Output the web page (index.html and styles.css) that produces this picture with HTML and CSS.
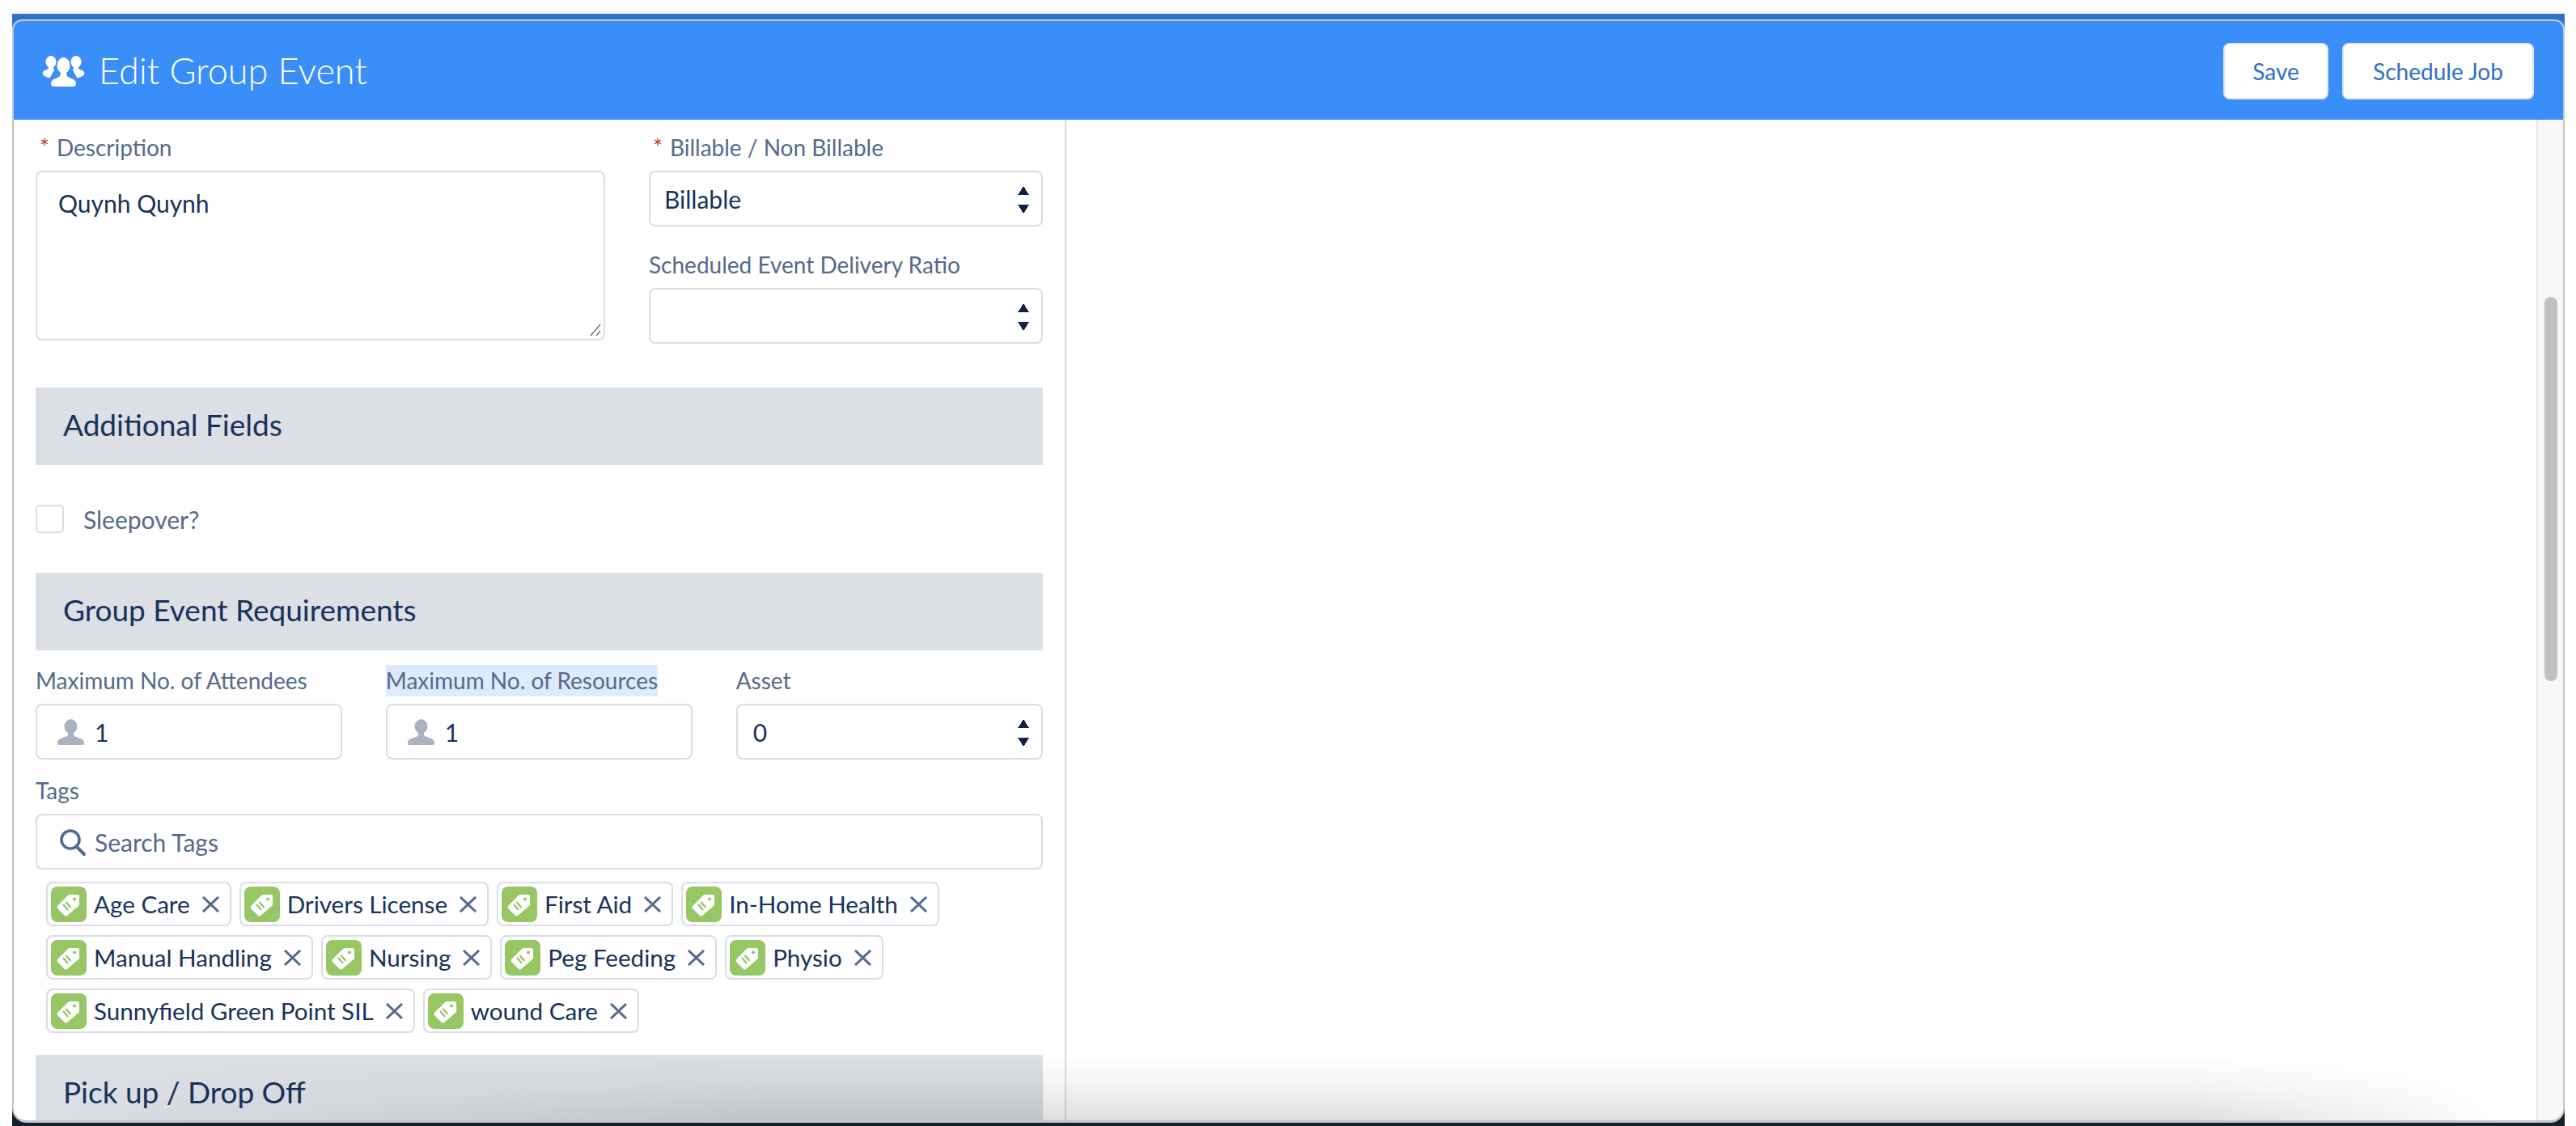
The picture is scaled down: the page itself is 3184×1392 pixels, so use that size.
FILE: index.html
```html
<!DOCTYPE html>
<html lang="en">
<head>
  <meta charset="UTF-8" />
  <title>Edit Group Event</title>
  <link rel="stylesheet" href="styles.css">
</head>
<body>

  <svg class="defs" width="0" height="0">
    <symbol id="tag" viewBox="0 0 44 44">
      <path d="M8 24 L21 11 Q22 10 23 10 L33 10 Q35 10 35 12 L35 22 Q35 23 34 24 L20 36 Q18 37 17 36 L8 27 Q7 25 8 24Z" fill="#fff"/>
      <circle cx="29" cy="15.5" r="2" fill="#97c665"/>
      <path d="M15 22 L21 29 M18.5 19 L24.5 26" stroke="#97c665" stroke-width="2.4" fill="none"/>
    </symbol>
    <symbol id="close" viewBox="0 0 23 20">
      <path d="M2 1 L21 19 M21 1 L2 19" stroke="#54698d" stroke-width="3" fill="none"/>
    </symbol>
    <symbol id="person" viewBox="0 0 33 32">
      <ellipse cx="16.5" cy="9" rx="8" ry="9" fill="#a8b3bf"/>
      <path d="M13 17 L20 17 L20 20 C22 23 33 23 33 29 L33 30 Q33 32 31 32 L2 32 Q0 32 0 30 L0 29 C0 23 11 23 13 20Z" fill="#a8b3bf"/>
    </symbol>
  </svg>

  <div class="backdrop">
    <div class="modal">

      <header class="modal-head">
        <div class="modal-title">
          <svg class="group-icon" width="53" height="38" viewBox="0 0 53 38">
            <ellipse cx="26.5" cy="12" rx="8" ry="10" fill="#fff"/>
            <path d="M23 21 L30 21 L31 25 C33 28 42 28 42 34 Q42 38 38 38 L15 38 Q11 38 11 34 C11 28 20 28 22 25Z" fill="#fff"/>
            <ellipse cx="11" cy="7.5" rx="6.5" ry="7.5" fill="#fff"/>
            <path d="M8 14 L14 14 L15 18 C13 21 12 23 10 27 Q8 28 3 25 C0 23 0 20 3 18 C6 17 8 17 8 14Z" fill="#fff"/>
            <ellipse cx="42" cy="7.5" rx="6.5" ry="7.5" fill="#fff"/>
            <path d="M45 14 L39 14 L38 18 C40 21 41 23 43 27 Q45 28 50 25 C53 23 53 20 50 18 C47 17 45 17 45 14Z" fill="#fff"/>
          </svg>
          <h1>Edit Group Event</h1>
        </div>
        <div class="modal-actions">
          <button class="btn btn-save">Save</button>
          <button class="btn btn-job">Schedule Job</button>
        </div>
      </header>

      <div class="modal-body">
        <div class="form-pane">

          <div class="top-row">
            <div>
              <label class="lbl"><span class="req">*</span>Description</label>
              <div class="field area">
                Quynh Quynh
                <svg class="grip" width="14" height="16" viewBox="0 0 14 16">
                  <path d="M1 15 L13 1 M8 15 L13 9" stroke="#666" stroke-width="1.2" fill="none"/>
                </svg>
              </div>
            </div>
            <div>
              <label class="lbl"><span class="req">*</span>Billable / Non Billable</label>
              <div class="field select">Billable<span class="arrows"></span></div>
              <label class="lbl lbl-next">Scheduled Event Delivery Ratio</label>
              <div class="field select"><span class="arrows"></span></div>
            </div>
          </div>

          <h2 class="section section-first">Additional Fields</h2>
          <div class="check-row">
            <span class="checkbox"></span>
            <span class="check-label">Sleepover?</span>
          </div>

          <h2 class="section">Group Event Requirements</h2>
          <div class="three-col">
            <div>
              <label class="lbl">Maximum No. of Attendees</label>
              <div class="field count"><svg class="person" width="33" height="32"><use href="#person"/></svg>1</div>
            </div>
            <div>
              <label class="lbl"><span class="hilite">Maximum No. of Resources</span></label>
              <div class="field count"><svg class="person" width="33" height="32"><use href="#person"/></svg>1</div>
            </div>
            <div>
              <label class="lbl">Asset</label>
              <div class="field select asset">0<span class="arrows"></span></div>
            </div>
          </div>

          <label class="lbl lbl-tags">Tags</label>
          <div class="field search">
            <svg class="search-icon" width="33" height="34" viewBox="0 0 33 34">
              <circle cx="14" cy="14" r="11" stroke="#54698d" stroke-width="3.6" fill="none"/>
              <path d="M22 23 L31 32" stroke="#54698d" stroke-width="4" stroke-linecap="round"/>
            </svg>
            Search Tags
          </div>

          <div class="pills" id="pills"></div>

          <h2 class="section section-last">Pick up / Drop Off</h2>
        </div>

        <div class="blank-pane"></div>
        <div class="scroll-track"><div class="scroll-thumb"></div></div>
      </div>

      <div class="bottom-fade"></div>
    </div>
  </div>

  <script>
    const tags = ['Age Care', 'Drivers License', 'First Aid', 'In-Home Health', 'Manual Handling', 'Nursing', 'Peg Feeding', 'Physio', 'Sunnyfield Green Point SIL', 'wound Care'];
    const pills = document.getElementById('pills');
    tags.forEach(t => {
      const pill = document.createElement('span');
      pill.className = 'pill';
      pill.innerHTML = `<svg class="tag-icon" width="44" height="44"><use href="#tag"/></svg><span class="pill-text">${t}</span><svg class="x-icon" width="23" height="20"><use href="#close"/></svg>`;
      pills.appendChild(pill);
    });
  </script>

</body>
</html>
```

FILE: styles.css
```css
* { margin: 0; padding: 0; box-sizing: border-box; }

html, body {
  width: 3184px;
  height: 1392px;
  overflow: hidden;
  background: #fff;
  font-family: 'Lato', 'Open Sans', sans-serif;
  color: #16325c;
}

.defs { display: block; }

.backdrop {
  width: 3155px;
  height: 1375px;
  margin: 17px 0 0 15px;
  padding-top: 7px;
  background: linear-gradient(#2f72cc 0, #2f72cc 50%, #10222c 50%, #10222c 100%);
}

.modal {
  position: relative;
  height: 1364px;
  display: flex;
  flex-direction: column;
  overflow: hidden;
  background: #fff;
  border: solid #c6c6c6;
  border-width: 2px 2px 3px 2px;
  border-radius: 12px 12px 18px 18px;
}

.modal-head {
  height: 122px;
  flex: none;
  display: flex;
  justify-content: space-between;
  align-items: center;
  background: #3a8efa;
  padding: 2px 36px 0 35px;
}

.modal-title { display: flex; align-items: center; gap: 17px; }

.modal-title h1 {
  font-size: 45px;
  font-weight: 300;
  color: #fff;
  margin-bottom: 3px;
}

.modal-actions { display: flex; gap: 17px; }

.btn {
  height: 70px;
  background: #fff;
  border: 2px solid #dfe3ea;
  border-radius: 8px;
  font-family: inherit;
  font-size: 28px;
  color: #2e6fc7;
}

.btn-save { width: 130px; }
.btn-job { width: 237px; }

.modal-body {
  flex: 1;
  min-height: 0;
  display: flex;
}

.form-pane {
  width: 1301px;
  flex: none;
  padding: 15px 27px 0 27px;
  border-right: 2px solid #d8dde6;
}

.blank-pane { flex: 1; }

.scroll-track {
  width: 33px;
  flex: none;
  padding: 219px 7px 0 8px;
  background: #f8f8f8;
  border-left: 2px solid #e8e8e8;
}

.scroll-thumb {
  height: 475px;
  background: #c1c1c1;
  border-radius: 9px;
}

.top-row {
  display: grid;
  grid-template-columns: 704px 487px;
  gap: 54px;
}

.lbl {
  display: block;
  height: 39px;
  margin-bottom: 9px;
  line-height: 39px;
  font-size: 28px;
  color: #54698d;
}

.lbl-next { margin-top: 28px; }
.lbl-tags { margin-top: 19px; }

.req { color: #c23934; margin: 0 9px 0 5px; }

.hilite { display: inline-block; background: #dcecfd; }

.field {
  position: relative;
  height: 69px;
  display: flex;
  align-items: center;
  background: #fff;
  border: 2px solid #d8dde6;
  border-radius: 8px;
  font-size: 30px;
  padding: 0 17px;
}

.area {
  height: 210px;
  align-items: flex-start;
  padding: 20px 26px;
}

.grip { position: absolute; right: 3px; bottom: 3px; }

.arrows {
  position: absolute;
  right: 15px;
  top: 17px;
  width: 14px;
  height: 34px;
  background:
    linear-gradient(to bottom right, transparent 50%, #0e2247 50%) left top / 7px 11px no-repeat,
    linear-gradient(to bottom left, transparent 50%, #0e2247 50%) right top / 7px 11px no-repeat,
    linear-gradient(to top right, transparent 50%, #0e2247 50%) left bottom / 7px 11px no-repeat,
    linear-gradient(to top left, transparent 50%, #0e2247 50%) right bottom / 7px 11px no-repeat;
}

.section {
  height: 96px;
  display: flex;
  align-items: center;
  padding: 0 0 6px 34px;
  background: #dcdfe4;
  font-size: 37px;
  font-weight: 400;
}

.section-first { margin-top: 54px; }
.section-last { margin-top: 27px; }

.check-row {
  height: 133px;
  display: flex;
  align-items: center;
  gap: 24px;
}

.checkbox {
  width: 35px;
  height: 35px;
  border: 2px solid #d8dde6;
  border-radius: 5px;
}

.check-label { font-size: 30px; color: #54698d; }

.three-col {
  display: grid;
  grid-template-columns: repeat(3, 1fr);
  gap: 53.5px;
  margin-top: 18px;
}

.count { padding-left: 25px; gap: 13px; }
.asset { padding-left: 19px; }

.search { padding-left: 27px; gap: 11px; font-size: 30px; color: #54698d; }

.pills {
  display: flex;
  flex-wrap: wrap;
  gap: 11px 10px;
  margin-top: 15px;
  padding-left: 13px;
  width: 1150px;
}

.pill {
  height: 55px;
  display: inline-flex;
  align-items: center;
  padding: 0 12px 0 4px;
  border: 2px solid #d8dde6;
  border-radius: 8px;
  font-size: 29.6px;
}

.tag-icon {
  flex: none;
  background: #97c665;
  border-radius: 8px;
  margin-right: 9px;
}

.x-icon { flex: none; margin-left: 14px; }

.bottom-fade {
  position: absolute;
  left: 0;
  right: 0;
  bottom: 0;
  height: 80px;
  pointer-events: none;
  background: linear-gradient(to top, rgba(0,0,0,.13) 0, rgba(0,0,0,.05) 50%, rgba(0,0,0,0) 100%);
  -webkit-mask-image: linear-gradient(to right, transparent 1%, #000 30%, #000 85%, transparent 98%);
  mask-image: linear-gradient(to right, transparent 1%, #000 30%, #000 85%, transparent 98%);
}
```
